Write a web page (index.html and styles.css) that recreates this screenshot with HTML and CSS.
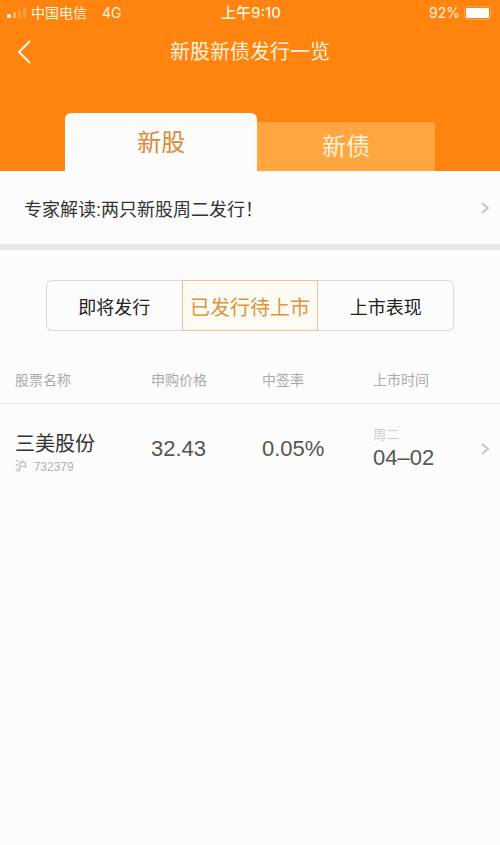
FILE: index.html
```html
<!DOCTYPE html>
<html lang="zh-CN">
<head>
<meta charset="utf-8">
<meta name="viewport" content="width=device-width, initial-scale=1">
<title>新股新债发行一览</title>
<link rel="stylesheet" href="styles.css">
</head>
<body>
<header class="header">
  <div class="status">
    <div class="status-left">
      <svg class="signal" width="20" height="12" viewBox="0 0 20 12" aria-hidden="true">
        <rect x="0" y="7" width="4" height="4" rx="1" fill="#fff3da"/>
        <rect x="6" y="5" width="3" height="6" rx="1" fill="#ffb45e"/>
        <rect x="11" y="3" width="3" height="8" rx="1" fill="#ff9f3c"/>
        <rect x="16" y="0" width="3" height="11" rx="1" fill="#ff9f3c"/>
      </svg>
      <span>中国电信</span>
      <span class="network">4G</span>
    </div>
    <span class="clock">上午9:10</span>
    <div class="status-right">
      <span>92%</span>
      <svg width="31" height="14" viewBox="0 0 31 14" aria-hidden="true">
        <rect x="0.5" y="0.5" width="26" height="13" rx="3" fill="none" stroke="#ffa74a"/>
        <rect x="2" y="2" width="23" height="10" rx="1" fill="#fff"/>
        <path d="M28 5q2 2 0 4z" fill="#ffb765"/>
      </svg>
    </div>
  </div>
  <div class="nav">
    <button class="back" type="button" aria-label="返回">
      <svg width="16" height="24" viewBox="0 0 16 24" aria-hidden="true">
        <path d="M14 1L3 12L14 23" fill="none" stroke="#fff6e4" stroke-width="2"/>
      </svg>
    </button>
    <h1 class="title">新股新债发行一览</h1>
  </div>
  <div class="tabs">
    <button class="tab tab-active" type="button">新股</button>
    <button class="tab" type="button">新债</button>
  </div>
</header>
<main>
  <a class="notice" href="#notice">
    <span>专家解读:两只新股周二发行！</span>
    <svg class="chevron" width="9" height="12" viewBox="0 0 9 12" aria-hidden="true"><path d="M1 1L7 6L1 11"/></svg>
  </a>
  <div class="segments">
    <button class="segment" type="button">即将发行</button>
    <button class="segment segment-active" type="button">已发行待上市</button>
    <button class="segment" type="button">上市表现</button>
  </div>
  <table class="stocks">
    <thead>
      <tr><th class="col-name">股票名称</th><th class="col-value">申购价格</th><th class="col-value">中签率</th><th>上市时间</th></tr>
    </thead>
    <tbody>
      <tr>
        <td><div class="name">三美股份</div><div class="code">沪&nbsp; 732379</div></td>
        <td class="number">32.43</td>
        <td class="number">0.05%</td>
        <td>
          <div class="listing">
            <div><div class="weekday">周二</div><div class="number">04–02</div></div>
            <svg class="chevron" width="9" height="12" viewBox="0 0 9 12" aria-hidden="true"><path d="M1 1L7 6L1 11"/></svg>
          </div>
        </td>
      </tr>
    </tbody>
  </table>
</main>
</body>
</html>
```

FILE: styles.css
```css
* {
  box-sizing: border-box;
}

body {
  margin: 0;
  background: #fcfcfc;
  color: #333;
  font-family: "Liberation Sans", "Noto Sans CJK SC", sans-serif;
}

button {
  margin: 0;
  padding: 0;
  border: 0;
  background: none;
  font: inherit;
}

.header {
  background: #ff830f;
  color: #fff3de;
}

.status {
  display: grid;
  grid-template-columns: 1fr auto 1fr;
  align-items: center;
  height: 26px;
  padding: 0 5px 0 7px;
  font-family: Inter, "Noto Sans CJK SC", sans-serif;
  font-size: 14px;
  line-height: 26px;
}

.status-left,
.status-right {
  display: flex;
  align-items: center;
  gap: 4px;
}

.status-right {
  justify-content: flex-end;
}

.network {
  margin-left: 11px;
}

.clock {
  font-size: 15px;
  font-weight: 500;
}

.nav {
  display: grid;
  grid-template-columns: 48px 1fr 48px;
  align-items: center;
  height: 52px;
}

.back {
  display: flex;
  justify-content: center;
}

.title {
  margin: 0;
  font-size: 20px;
  font-weight: 400;
  line-height: 28px;
  text-align: center;
}

.tabs {
  display: flex;
  align-items: flex-end;
  padding: 35px 13% 0;
}

.tab {
  flex: 12;
  height: 49px;
  border-radius: 0 4px 0 0;
  background: #ffa640;
  color: #fff3de;
  font-size: 24px;
  line-height: 48px;
}

.tab-active {
  flex: 13;
  height: 58px;
  border-radius: 6px 6px 0 0;
  background: #fcfcfc;
  color: #dd8935;
  line-height: 60px;
}

.notice {
  display: flex;
  align-items: center;
  justify-content: space-between;
  height: 79px;
  padding: 0 10px 0 24px;
  border-bottom: 6px solid #e7e7e7;
  color: #333;
  font-size: 18px;
  text-decoration: none;
}

.chevron {
  flex: none;
  fill: none;
  stroke: #c4c4c4;
  stroke-width: 2;
}

.segments {
  display: flex;
  margin: 30px 46px 0;
}

.segment {
  flex: 1;
  height: 51px;
  border: 1px solid #d9d9d9;
  color: #222;
  font-size: 18px;
  white-space: nowrap;
}

.segment:first-child {
  border-right: 0;
  border-radius: 6px 0 0 6px;
}

.segment:last-child {
  border-left: 0;
  border-radius: 0 6px 6px 0;
}

.segment-active {
  padding-top: 2px;
  border-color: #efc391;
  background: #fbfbf3;
  color: #de943f;
  font-size: 20px;
}

.stocks {
  width: 100%;
  margin-top: 24px;
  border-collapse: collapse;
  table-layout: fixed;
}

.stocks th {
  height: 48px;
  padding: 0;
  border-bottom: 1px solid #e3e3e3;
  color: #aaa;
  font-size: 14px;
  font-weight: 400;
  text-align: left;
}

.stocks td {
  height: 92px;
  padding: 0;
}

.stocks th:first-child,
.stocks td:first-child {
  padding-left: 15px;
}

.stocks td:first-child {
  padding-top: 8px;
}

.col-name {
  width: 30.2%;
}

.col-value {
  width: 22.2%;
}

.name {
  font-size: 20px;
  line-height: 28px;
}

.code {
  color: #b0b0b0;
  font-size: 12px;
  line-height: 18px;
}

.number {
  color: #555;
  font-size: 22px;
  line-height: 28px;
}

.listing {
  display: flex;
  align-items: center;
  justify-content: space-between;
  padding-right: 10px;
}

.weekday {
  color: #ccc;
  font-size: 13px;
  line-height: 18px;
}
```
